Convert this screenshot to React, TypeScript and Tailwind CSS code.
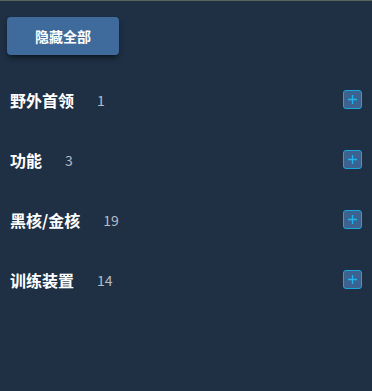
import React from 'react';

const groups = [
  { name: '野外首领', count: 1 },
  { name: '功能', count: 3 },
  { name: '黑核/金核', count: 19 },
  { name: '训练装置', count: 14 },
];

export default function App() {
  return (
    <div
      className="w-[372px] h-[391px] bg-[#1f3045] border-t border-[#5a6458] text-white"
      style={{ fontFamily: '"Microsoft YaHei", "Noto Sans CJK SC", sans-serif' }}
    >
      <div className="pt-4 pl-[7px]">
        <button className="w-[112px] h-[38px] rounded bg-[#3e6b9b] shadow-md shadow-black/40 text-[14px] font-bold text-white">
          隐藏全部
        </button>
      </div>
      <div className="mt-[35px] flex flex-col gap-[41px] pl-[10px] pr-[10px]">
        {groups.map((g) => (
          <div key={g.name} className="flex items-center h-[19px]">
            <span className="text-[16px] font-semibold leading-none">{g.name}</span>
            <span className="ml-[23px] text-[14px] text-[#b4bcc6] leading-none">{g.count}</span>
            <button className="ml-auto w-[19px] h-[19px] rounded-[3px] border border-[#1ea6dc] bg-[#3c6390] flex items-center justify-center">
              <svg width="11" height="11" viewBox="0 0 11 11">
                <path d="M5.5 1v9M1 5.5h9" stroke="#22b4ec" strokeWidth="1.3" />
              </svg>
            </button>
          </div>
        ))}
      </div>
    </div>
  );
}
